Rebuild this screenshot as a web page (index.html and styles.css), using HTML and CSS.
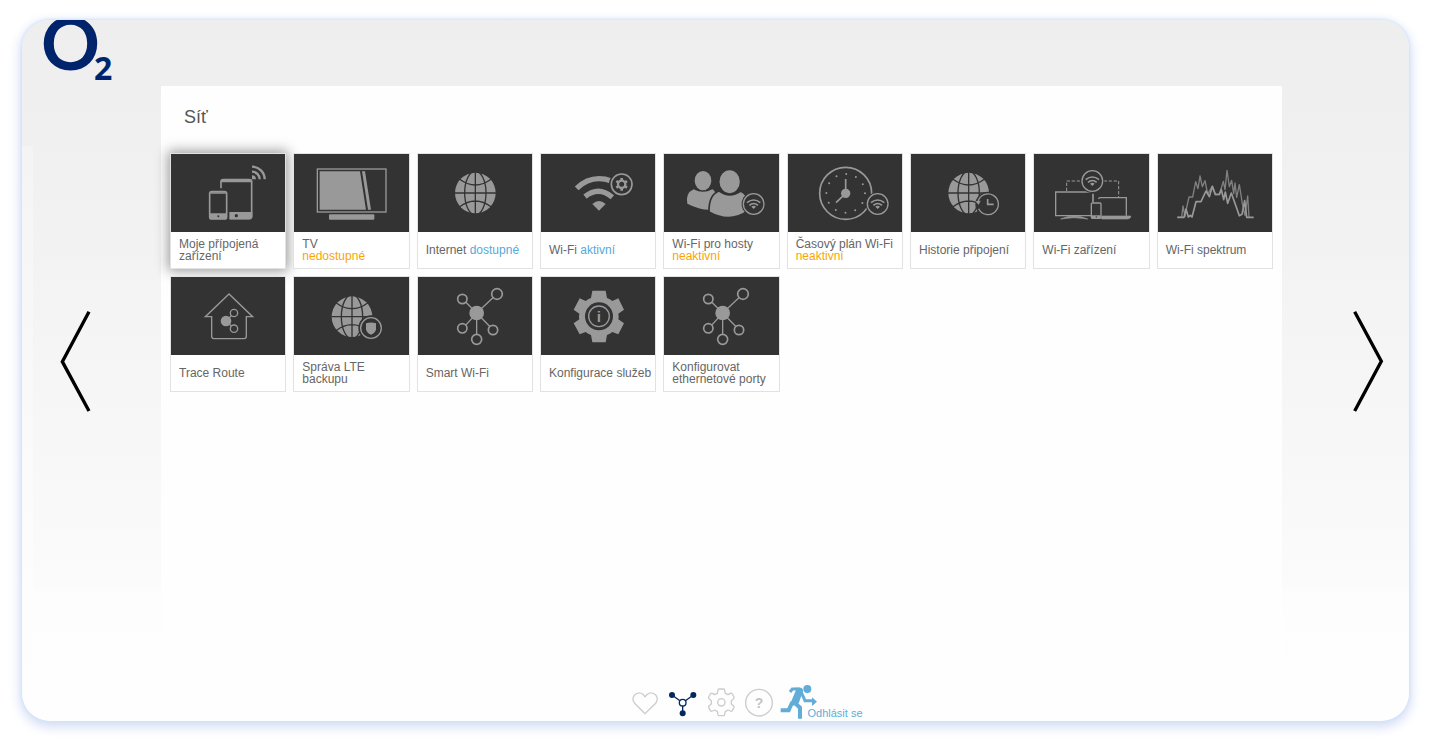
FILE: index.html
```html
<!DOCTYPE html>
<html lang="cs">
<head>
<meta charset="utf-8">
<title>O2 – Síť</title>
<link rel="stylesheet" href="styles.css">
</head>
<body>
<svg class="defs" aria-hidden="true">
  <defs>
    <g id="globe">
      <circle r="61" fill="#999"/>
      <g fill="none" stroke="#333" stroke-width="4">
        <path d="M0-62V62M-62 0H62M-48-42Q0-6 48-42M-48 42Q0 6 48 42"/>
        <ellipse rx="32" ry="66"/>
      </g>
    </g>
    <g id="wifi-badge">
      <circle r="36" fill="#333"/>
      <circle r="31" fill="none" stroke="#999" stroke-width="4"/>
      <path d="M-20-4Q0-20 20-4M-13 4Q0-7 13 4" fill="none" stroke="#999" stroke-width="5"/>
      <path d="M-7 8Q0 2 7 8L0 15Z" fill="#999"/>
    </g>
    <g id="nodes">
      <path d="M0 0L-34-34M0 0L52-49M0 0L-34 38M0 0V65M0 0L41 42" stroke="#999" stroke-width="4"/>
      <circle r="22" fill="#999"/>
      <g fill="#333" stroke="#999" stroke-width="5">
        <circle cx="-43" cy="-42" r="14"/>
        <circle cx="61" cy="-57" r="16"/>
        <circle cx="-43" cy="46" r="14"/>
        <circle cx="0" cy="79" r="15"/>
        <circle cx="49" cy="51" r="14"/>
      </g>
    </g>
  </defs>
</svg>

<div class="frame">
  <header class="header">
    <a class="logo" href="#" aria-label="O2">
      <svg width="80" height="66" viewBox="0 0 80 66" aria-hidden="true">
        <text class="logo-o" x="-2" y="50">O</text>
        <text class="logo-2" x="51" y="60">2</text>
      </svg>
    </a>
  </header>

  <div class="middle">
    <button class="arrow arrow-prev" type="button" aria-label="Předchozí">
      <svg width="32" height="103" viewBox="180 60 96 309"><path d="M267 65L187 215L267 363"/></svg>
    </button>

    <main class="panel">
      <h1 class="title">Síť</h1>
      <ul class="tiles">
        <li><a class="tile tile-active" href="#">
          <svg class="picture" viewBox="33 41 343 234" aria-hidden="true">
            <path d="M183 144V125Q183 118 190 118H268Q275 118 275 125V228Q275 235 268 235H209" fill="none" stroke="#999" stroke-width="5"/>
            <path d="M182 126Q182 116 190 116H268Q277 116 277 126Z M208 215H277V228Q277 237 268 237H208Z" fill="#999"/>
            <rect x="149" y="154" width="51" height="82" rx="7" fill="#333" stroke="#999" stroke-width="5"/>
            <path d="M149 219H200V232Q200 237 194 237H155Q149 237 149 232Z" fill="#999"/>
            <path d="M152 158H197" stroke="#999" stroke-width="4"/>
            <circle cx="175" cy="228" r="3" fill="#333"/><circle cx="229" cy="226" r="5" fill="#333"/>
            <path d="M276 79A38 38 0 0 1 314 117M276 94A23 23 0 0 1 299 117" fill="none" stroke="#999" stroke-width="7"/>
            <path d="M276 105A12 12 0 0 1 288 117H276Z" fill="#999"/>
          </svg>
          <span class="label"><span>Moje přípojená zařízení</span></span>
        </a></li>
        <li><a class="tile" href="#">
          <svg class="picture" viewBox="403 41 343 234" aria-hidden="true">
            <rect x="473" y="86" width="206" height="129" fill="none" stroke="#999" stroke-width="4"/>
            <path d="M480 93H601L619 208H480Z M607 93H616L634 208H625Z" fill="#999"/>
            <rect x="508" y="222" width="136" height="16" rx="3" fill="#999"/>
          </svg>
          <span class="label"><span>TV<br><span class="off">nedostupné</span></span></span>
        </a></li>
        <li><a class="tile" href="#">
          <svg class="picture" viewBox="24 41 343 234" aria-hidden="true"><use href="#globe" x="196" y="158"/></svg>
          <span class="label"><span>Internet <span class="on">dostupné</span></span></span>
        </a></li>
        <li><a class="tile" href="#">
          <svg class="picture" viewBox="393 41 343 234" aria-hidden="true">
            <path d="M500 144Q530 115 567 115Q586 115 602 121M525 169Q566 136 607 171" fill="none" stroke="#999" stroke-width="16"/>
            <path d="M547 191Q567 173 587 191L567 211Z" fill="#999"/>
            <circle cx="635" cy="132" r="38" fill="#333"/>
            <circle cx="635" cy="132" r="31" fill="none" stroke="#999" stroke-width="5"/>
            <circle cx="635" cy="132" r="11" fill="none" stroke="#999" stroke-width="7"/>
            <path d="M635 113V120M635 144V151M619 122L625 126M645 138L651 142M651 122L645 126M625 138L619 142" stroke="#999" stroke-width="8"/>
          </svg>
          <span class="label"><span>Wi-Fi <span class="on">aktivní</span></span></span>
        </a></li>
        <li><a class="tile" href="#">
          <svg class="picture" viewBox="28 41 343 234" aria-hidden="true">
            <g fill="#999">
              <ellipse cx="145" cy="121" rx="25" ry="29"/>
              <path d="M117 147Q145 162 173 147Q183 151 183 170V206Q145 214 98 190Q92 158 117 147Z"/>
              <g stroke="#333" stroke-width="5">
                <path d="M194 152Q225 175 258 152Q280 163 280 186V212Q225 250 163 215Q162 162 194 152Z"/>
                <ellipse cx="225" cy="124" rx="33" ry="37"/>
              </g>
            </g>
            <use href="#wifi-badge" x="297" y="191"/>
          </svg>
          <span class="label"><span>Wi-Fi pro hosty<br><span class="off">neaktivní</span></span></span>
        </a></li>
        <li><a class="tile" href="#">
          <svg class="picture" viewBox="399 41 343 234" aria-hidden="true">
            <circle cx="572" cy="159" r="78" fill="none" stroke="#999" stroke-width="5"/>
            <circle cx="572" cy="159" r="58" fill="none" stroke="#999" stroke-width="6" stroke-linecap="round" stroke-dasharray="0 30.37"/>
            <path d="M572 159V116M572 159L543 187" stroke="#999" stroke-width="5"/>
            <circle cx="572" cy="159" r="14" fill="#999"/>
            <use href="#wifi-badge" x="668" y="191"/>
          </svg>
          <span class="label"><span>Časový plán Wi-Fi<br><span class="off">neaktivní</span></span></span>
        </a></li>
        <li><a class="tile" href="#">
          <svg class="picture" viewBox="33 41 343 234" aria-hidden="true">
            <use href="#globe" x="206" y="158"/>
            <circle cx="264" cy="192" r="38" fill="#333"/>
            <path d="M234 184A31 31 0 1 1 236 205" fill="none" stroke="#999" stroke-width="4"/>
            <path d="M226 183L242 181L236 193Z" fill="#999"/>
            <path d="M263 176V192H281" fill="none" stroke="#999" stroke-width="5"/>
          </svg>
          <span class="label"><span>Historie připojení</span></span>
        </a></li>
        <li><a class="tile" href="#">
          <svg class="picture" viewBox="403 41 343 234" aria-hidden="true">
            <path d="M501 152V122H544M612 122H657V170" fill="none" stroke="#999" stroke-width="3" stroke-dasharray="10 5"/>
            <path d="M573 155H468V226H574M597 176Q597 172 602 172H680V226" fill="none" stroke="#999" stroke-width="4"/>
            <path d="M483 236Q523 218 564 236Q523 228 483 236Z M606 227H693V231Q690 236 683 236H606Z" fill="#999" stroke="#999" stroke-width="2"/>
            <path d="M580 160V186" stroke="#999" stroke-width="5"/>
            <rect x="575" y="188" width="29" height="46" rx="3" fill="#333" stroke="#999" stroke-width="4"/>
            <path d="M576 229H603" stroke="#999" stroke-width="8"/><circle cx="590" cy="230" r="2" fill="#333"/>
            <use href="#wifi-badge" x="578" y="122"/>
          </svg>
          <span class="label"><span>Wi-Fi zařízení</span></span>
        </a></li>
        <li><a class="tile" href="#">
          <svg class="picture" viewBox="54 41 343 234" aria-hidden="true">
            <g fill="none" stroke-linejoin="round">
              <path d="M112 231H125L129 197L135 229L139 206L147 170H158L167 124L174 145L180 107L187 139L195 121L203 161L217 138L226 163H238L250 123L255 148L261 90L268 139L275 120L281 160L285 128L290 171L298 133L307 190L315 225L323 167L327 231" stroke="#808080" stroke-width="4"/>
              <path d="M112 231H132L138 206L145 230L151 225L156 230L168 184H183L198 152L208 169L217 138L226 162H238L244 148L251 178L256 155L263 189L274 158L298 226L306 222L314 181L320 231H341" stroke="#999" stroke-width="5"/>
            </g>
          </svg>
          <span class="label"><span>Wi-Fi spektrum</span></span>
        </a></li>
        <li><a class="tile" href="#">
          <svg class="picture" viewBox="33 21 343 234" aria-hidden="true">
            <g fill="none" stroke="#999" stroke-width="4">
              <path d="M207 72L136 140H155V199Q155 206 162 206H252Q259 206 259 199V140H278Z"/>
              <path d="M198 153L214 137M198 153L214 168"/>
              <circle cx="222" cy="129" r="11"/><circle cx="222" cy="176" r="11"/>
            </g>
            <circle cx="198" cy="153" r="16" fill="#999"/>
          </svg>
          <span class="label"><span>Trace Route</span></span>
        </a></li>
        <li><a class="tile" href="#">
          <svg class="picture" viewBox="403 21 343 234" aria-hidden="true">
            <use href="#globe" x="577" y="140"/>
            <circle cx="634" cy="174" r="38" fill="#333"/>
            <circle cx="634" cy="174" r="31" fill="none" stroke="#999" stroke-width="4"/>
            <path d="M619 160Q634 155 649 160V178Q647 190 634 194Q621 190 619 178Z" fill="#999"/>
          </svg>
          <span class="label"><span>Správa LTE backupu</span></span>
        </a></li>
        <li><a class="tile" href="#">
          <svg class="picture" viewBox="24 21 343 234" aria-hidden="true"><use href="#nodes" x="200" y="129"/></svg>
          <span class="label"><span>Smart Wi-Fi</span></span>
        </a></li>
        <li><a class="tile" href="#">
          <svg class="picture" viewBox="393 21 343 234" aria-hidden="true">
            <path d="M547 62H587L591 84Q600 87 607 93L625 85L642 119L625 131Q627 140 625 148L642 160L625 193L607 186Q600 192 591 195L587 217H547L543 195Q534 192 527 186L509 193L491 160L508 148Q506 140 508 131L491 119L509 85L527 93Q534 87 543 84Z" fill="#999"/>
            <circle cx="567" cy="139" r="42" fill="#333"/>
            <circle cx="567" cy="139" r="31" fill="none" stroke="#999" stroke-width="4"/>
            <text class="info" x="567" y="156">i</text>
          </svg>
          <span class="label"><span>Konfigurace služeb</span></span>
        </a></li>
        <li><a class="tile" href="#">
          <svg class="picture" viewBox="28 21 343 234" aria-hidden="true"><use href="#nodes" x="204" y="129"/></svg>
          <span class="label"><span>Konfigurovat ethernetové porty</span></span>
        </a></li>
      </ul>
    </main>

    <button class="arrow arrow-next" type="button" aria-label="Další">
      <svg width="32" height="103" viewBox="275 60 96 309"><path d="M283 65L363 214L283 363"/></svg>
    </button>
  </div>

  <nav class="footer" aria-label="Hlavní nabídka">
    <a href="#" aria-label="Oblíbené">
      <svg width="38" height="35" viewBox="18 28 114 105"><path d="M75 117L44 86Q34 73 43 62Q56 49 69 59L75 66L82 59Q95 49 108 62Q116 73 107 86Z" fill="none" stroke="#ccc" stroke-width="4"/></svg>
    </a>
    <a href="#" aria-label="Síť">
      <svg width="38" height="35" viewBox="132 28 114 105">
        <path d="M188 84L156 61M188 84L220 61M188 84V116" stroke="#03285c" stroke-width="4"/>
        <circle cx="188" cy="84" r="10" fill="#fefefe" stroke="#03285c" stroke-width="4"/>
        <g fill="#03285c"><circle cx="156" cy="61" r="9"/><circle cx="220" cy="61" r="9"/><circle cx="188" cy="116" r="9"/></g>
      </svg>
    </a>
    <a href="#" aria-label="Nastavení">
      <svg width="38" height="35" viewBox="246 28 114 105">
        <g fill="none" stroke="#ccc" stroke-width="4" stroke-linejoin="round">
          <path d="M297 43H311Q314 43 314 47L316 56Q320 58 324 60L331 56Q335 55 337 58L342 67Q343 71 340 73L334 78V88L340 93Q343 95 342 98L337 108Q334 111 331 109L324 106Q320 109 316 110L314 119Q314 123 311 123H297Q294 123 294 119L292 110Q288 109 284 106L277 109Q274 111 271 108L266 98Q265 95 268 93L274 88V78L268 73Q265 71 266 67L271 58Q273 55 277 56L284 60Q288 58 292 56L294 47Q294 43 297 43Z"/>
          <circle cx="304" cy="83" r="11"/>
        </g>
      </svg>
    </a>
    <a href="#" aria-label="Nápověda">
      <svg width="38" height="35" viewBox="360 28 114 105">
        <circle cx="417" cy="84" r="40" fill="none" stroke="#ccc" stroke-width="4"/>
        <text class="question" x="417" y="100">?</text>
      </svg>
    </a>
    <a class="logout" href="#">
      <svg width="39" height="35" viewBox="475 28 117 105" aria-hidden="true">
        <circle cx="563" cy="43" r="12" fill="#62add8"/>
        <path d="M526 39H545Q553 44 549 53L537 86L520 93L513 84L529 46Z" fill="#62add8"/>
        <g fill="none" stroke="#62add8">
          <path d="M511 52L518 43H541M545 53L556 78H581" stroke-width="9"/>
          <path d="M518 82L507 107H483M522 82L541 99V132" stroke-width="12"/>
        </g>
        <path d="M577 68L592 81L577 94Z" fill="#62add8"/>
      </svg>
      <span class="logout-text">Odhlásit se</span>
    </a>
  </nav>
</div>
</body>
</html>
```

FILE: styles.css
```css
* {
  box-sizing: border-box;
}

body {
  margin: 0;
  padding: 20px 26px 29px 22px;
  background: #fff;
  color: #666;
  font-family: "Liberation Sans", Arial, sans-serif;
  font-size: 12px;
  line-height: 12px;
}

a {
  color: inherit;
  text-decoration: none;
}

svg {
  display: block;
}

.defs {
  position: absolute;
  width: 0;
  height: 0;
}

.frame {
  display: flex;
  flex-direction: column;
  min-height: calc(100vh - 49px);
  overflow: hidden;
  border-radius: 28px;
  background:
    linear-gradient(#f4f4f4, #fdfdfd 440px, #fefefe) 0 126px / 11px 100% no-repeat,
    linear-gradient(#eee, #f0f0f0 120px, #f4f4f4 290px, #f8f8f8 450px, #fbfbfb 568px, #fdfdfd 572px, #fefefe 100%);
  box-shadow: 0 0 3px 1px #d0e4fd, 0 4px 12px 2px #d3dcf4;
}

.header {
  height: 66px;
  padding-left: 21px;
}

.logo {
  display: inline-block;
}

.logo svg text {
  fill: #00246b;
}

.logo-o {
  font: 700 73px Lato, sans-serif;
}

.logo-2 {
  font: 700 32px "Noto Sans", sans-serif;
}

.middle {
  display: flex;
  flex: 1;
}

.arrow {
  display: flex;
  flex: none;
  align-items: flex-start;
  padding: 224px 0 0;
  border: 0;
  background: none;
  cursor: pointer;
}

.arrow path {
  fill: none;
  stroke: #000;
  stroke-width: 10;
}

.arrow-prev {
  width: 139px;
  padding-left: 38px;
}

.arrow-next {
  width: 127px;
  padding-left: 70px;
}

.panel {
  flex: 1;
  min-width: 0;
  padding: 19px 9px;
  background: #fefefe;
}

.title {
  margin: 0 0 24px;
  padding-left: 14px;
  color: #555;
  font-size: 18px;
  font-weight: 400;
  line-height: 24px;
}

.tiles {
  display: grid;
  grid-template-columns: repeat(9, minmax(0, 1fr));
  gap: 7px;
  margin: 0;
  padding: 0;
  list-style: none;
}

.tile {
  display: block;
  border: 1px solid #e2e2e2;
  background: #fff;
}

.tile-active {
  box-shadow: 0 0 12px 2px rgba(0, 0, 0, 0.4);
}

.picture {
  width: 100%;
  height: 78px;
  background: #333;
}

.info {
  fill: #999;
  font: 700 46px "Liberation Sans", sans-serif;
  text-anchor: middle;
}

.label {
  display: flex;
  align-items: center;
  height: 36px;
  padding-left: 8px;
}

.on {
  color: #55a9dc;
}

.off {
  color: #f9a602;
}

.footer {
  display: flex;
  height: 37px;
  padding-left: calc(50% - 90px);
}

.question {
  fill: #c4c4c4;
  font: 700 42px "Liberation Sans", sans-serif;
  text-anchor: middle;
}

.logout {
  display: flex;
  align-items: flex-end;
  height: 35px;
  color: #62add8;
  font-size: 11px;
}

.logout-text {
  margin-left: -9px;
}
```
